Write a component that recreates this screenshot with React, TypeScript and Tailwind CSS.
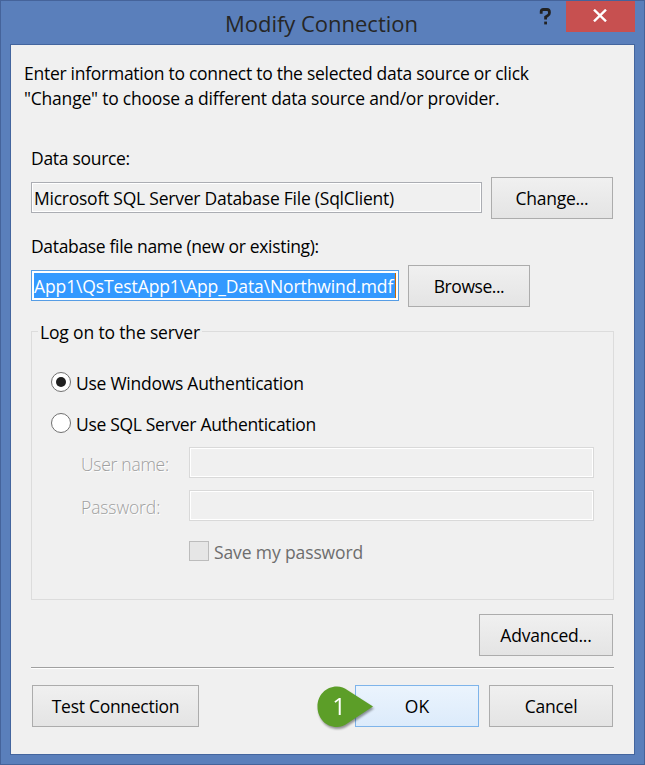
import type { ReactNode } from 'react';

type ButtonProps = { className: string; primary?: boolean; children: ReactNode };

function DialogButton({ className, primary = false, children }: ButtonProps) {
  const tone = primary
    ? 'border-[#7eb4ea] from-[#ebf4fd] to-[#dcebfb]'
    : 'border-[#acacac] from-[#f0f0f0] to-[#e4e4e4]';
  return (
    <button
      className={`flex h-[42px] shrink-0 items-center justify-center whitespace-nowrap border bg-linear-to-b ${tone} ${className}`}
    >
      {children}
    </button>
  );
}

function Radio({ checked = false, children }: { checked?: boolean; children: ReactNode }) {
  return (
    <div className="flex h-[24px] items-center gap-[5px]">
      <span className="-mt-[2px] flex size-5 shrink-0 items-center justify-center rounded-full border border-[#707070] bg-white">
        {checked && <span className="size-[10px] rounded-full bg-[#1f1f1f]" />}
      </span>
      {children}
    </div>
  );
}

function DisabledField({ label }: { label: ReactNode }) {
  return (
    <div className="flex h-[31px] items-center">
      <div className="w-[108px] shrink-0 whitespace-nowrap pt-[3px] font-light text-[#a0a0a0] [text-shadow:1px_1px_0_#ffffff]">{label}</div>
      <div className="h-[31px] w-[405px] border border-[#d9d9d9] shadow-[inset_0_0_0_1px_#ffffff]" />
    </div>
  );
}

export default function App() {
  return (
    <div className="flex h-[765px] w-[645px] flex-col border border-[#45639a] bg-[#5a7fbb] font-['Open_Sans',sans-serif] text-[17.5px] leading-[24px] text-black">
      <header className="flex h-[43px] shrink-0 items-start">
        <h1 className="w-[535px] whitespace-nowrap pl-[224px] pt-[6px] text-[22px] leading-[32px] text-[#262626]">
          <span className="tracking-[-0.02px]">Modify Connection</span>
        </h1>
        <svg className="ml-[2px] mt-[7px] h-[17px] w-[14px]" viewBox="1 0 14 17" fill="none" stroke="#222222">
          <path d="M4.2 5.8V3.5Q4.2 1.5 6.3 1.5H10Q12.4 1.5 12.4 4V5Q12.4 6.6 11 7.4L8.6 9V11.6" strokeWidth="2.8" />
          <path d="M7.2 15H10" strokeWidth="2.8" />
        </svg>
        <div className="ml-[14px] flex h-[31px] w-[69px] items-center justify-center bg-[#c75050] pb-[2px] pr-px">
          <svg className="h-[13px] w-[14px]" viewBox="0 0 14 13" fill="none" stroke="#ffffff" strokeWidth="2.4">
            <path d="M1 0.7L13 12.3M13 0.7L1 12.3" />
          </svg>
        </div>
      </header>

      <main className="ml-[9px] flex h-[711px] w-[625px] flex-col border border-[#43659e] bg-[#f0f0f0] pl-5">
        <p className="-ml-[7px] mt-[16px] whitespace-nowrap leading-[25px]">
          <span className="tracking-[-0.27px]">Enter information to connect to the selected data source or click</span>
          <br />
          <span className="tracking-[-0.21px]">"Change" to choose a different data source and/or provider.</span>
        </p>

        <label className="mt-[35px]"><span className="tracking-[-0.3px]">Data source:</span></label>
        <div className="mt-[7px] flex h-[42px] items-start gap-[9px]">
          <div className="mt-[5px] flex h-[31px] w-[451px] items-center whitespace-nowrap border border-[#abadb3] pl-[2px] pt-px shadow-[inset_0_0_0_1px_#ffffff]">
            <span className="tracking-[-0.24px]">Microsoft SQL Server Database File (SqlClient)</span>
          </div>
          <DialogButton className="w-[122px]"><span className="tracking-[-0.27px]">Change...</span></DialogButton>
        </div>

        <label className="mt-[15px]"><span className="tracking-[-0.33px]">Database file name (new or existing):</span></label>
        <div className="mt-[7px] flex h-[42px] items-start gap-[9px]">
          <div className="mt-[5px] h-[31px] w-[368px] border border-[#569de5] bg-white p-[2px]">
            <div className="flex h-[25px] items-center whitespace-nowrap border-r border-[#cc6600] bg-[#3399ff] pt-px text-white">
              <span className="tracking-[-0.11px]">App1\QsTestApp1\App_Data\Northwind.mdf</span>
            </div>
          </div>
          <DialogButton className="w-[122px]"><span className="tracking-[-0.45px]">Browse...</span></DialogButton>
        </div>

        <fieldset className="mt-[12px] h-[281px] w-[583px] border border-[#dcdcdc] pl-[19px]">
          <legend className="-ml-[13px] h-[24px] whitespace-nowrap pl-[2px] pr-[2px] leading-[26px]">
            <span className="tracking-[-0.16px]">Log on to the server</span>
          </legend>
          <div className="mt-[28px] flex flex-col gap-[17px]">
            <Radio checked><span className="tracking-[-0.26px]">Use Windows Authentication</span></Radio>
            <Radio><span className="tracking-[-0.32px]">Use SQL Server Authentication</span></Radio>
          </div>
          <div className="ml-[30px] mt-[11px] flex flex-col gap-[12px]">
            <DisabledField label={<span className="tracking-[-0.27px]">User name:</span>} />
            <DisabledField label={<span className="tracking-[-0.1px]">Password:</span>} />
          </div>
          <div className="ml-[138px] mt-[19px] flex h-[24px] items-center gap-[5px] text-[#6d6d6d]">
            <span className="-mt-[2px] size-5 border border-[#bcbcbc] bg-[#e6e6e6]" />
            <span className="tracking-[-0.12px]">Save my password</span>
          </div>
        </fieldset>

        <div className="mt-[14px] flex w-[582px] justify-end">
          <DialogButton className="w-[134px]"><span className="tracking-[-0.22px]">Advanced...</span></DialogButton>
        </div>
        <div className="mt-[11px] h-[2px] w-[583px] shrink-0 border-b border-t border-b-white border-t-[#a0a0a0]" />
        <footer className="ml-px mt-[16px] flex w-[581px]">
          <DialogButton className="w-[167px]"><span className="tracking-[-0.28px]">Test Connection</span></DialogButton>
          <div className="relative ml-auto mr-[10px]">
            <DialogButton primary className="w-[124px]"><span>OK</span></DialogButton>
            <svg className="absolute -left-[40px] -top-[1px] h-[48px] w-[62px] drop-shadow-[1px_2px_1px_rgba(0,0,0,0.4)]" viewBox="0 0 62 48">
              <path d="M58 22.5L33 6.5C29.5 4 26 2.5 22 2.5C10.5 2.5 2.5 11.5 2.5 22.5C2.5 34 10.5 43 22 43C26 43 29.5 41.5 33 39Z" fill="#5c9e28" />
              <text x="24" y="31" textAnchor="middle" fill="#ffffff" fontSize="24" fontFamily="Open Sans">1</text>
            </svg>
          </div>
          <DialogButton className="w-[124px]"><span className="tracking-[-0.25px]">Cancel</span></DialogButton>
        </footer>
      </main>
    </div>
  );
}
